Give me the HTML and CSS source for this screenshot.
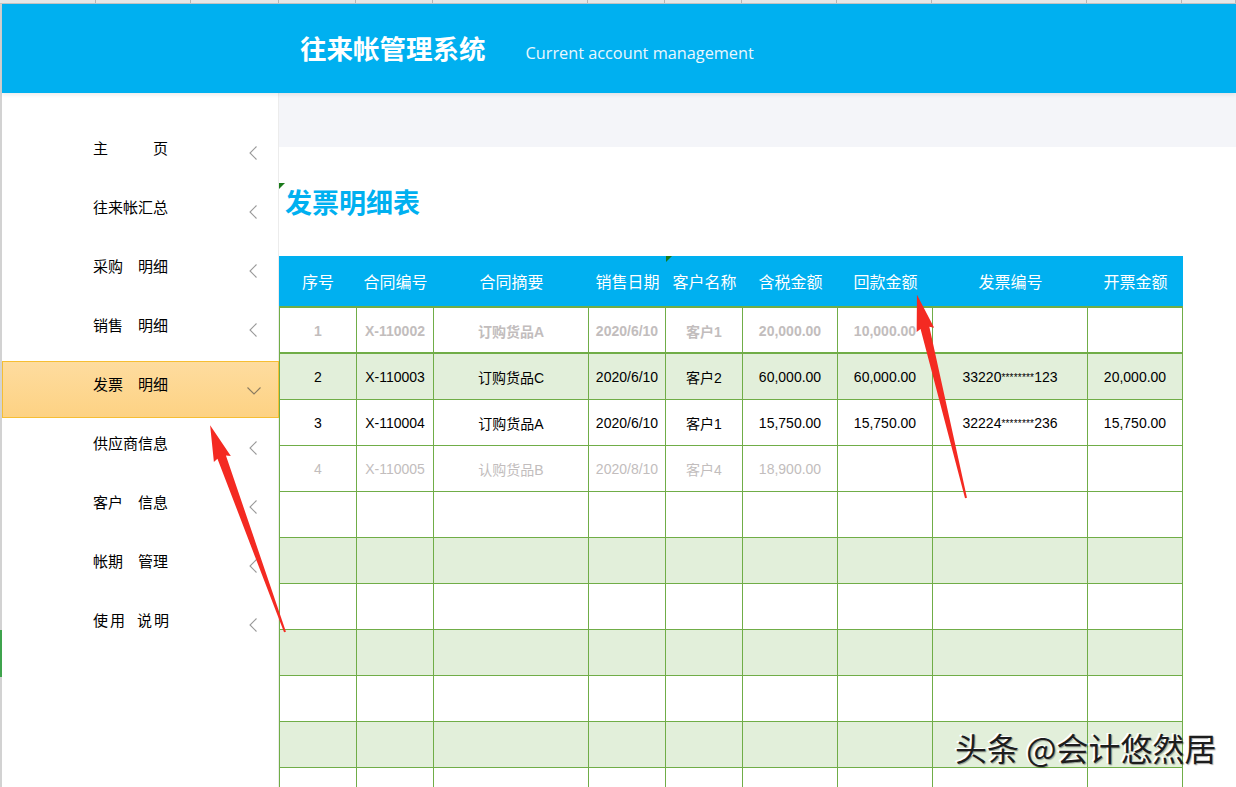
FILE: index.html
```html
<!DOCTYPE html>
<html lang="zh-CN">
<head>
<meta charset="utf-8">
<title>往来帐管理系统</title>
<link rel="stylesheet" href="styles.css">
</head>
<body>
<div class="colhdr">
  <span class="ch w96"></span><span class="ch w95"></span><span class="ch w88"></span><span class="ch w77"></span><span class="ch w77"></span><span class="ch w155"></span><span class="ch w77"></span><span class="ch w77"></span><span class="ch w95"></span><span class="ch w95"></span><span class="ch w155"></span><span class="ch w95"></span><span class="ch wrest"></span>
</div>
<div class="app">
  <div class="rowhdr"><div class="rowsel"></div></div>
  <div class="main">
    <header class="topbar">
      <h1 class="brand">往来帐管理系统</h1>
      <span class="sub">Current account management</span>
    </header>
    <div class="body">
      <nav class="sidebar">
        <div class="item"><span class="label">主　　　页</span><svg class="chev" viewBox="0 0 8 14"><polyline points="7.5,0.5 1,7 7.5,13.5"/></svg></div>
        <div class="item"><span class="label">往来帐汇总</span><svg class="chev" viewBox="0 0 8 14"><polyline points="7.5,0.5 1,7 7.5,13.5"/></svg></div>
        <div class="item"><span class="label">采购　明细</span><svg class="chev" viewBox="0 0 8 14"><polyline points="7.5,0.5 1,7 7.5,13.5"/></svg></div>
        <div class="item"><span class="label">销售　明细</span><svg class="chev" viewBox="0 0 8 14"><polyline points="7.5,0.5 1,7 7.5,13.5"/></svg></div>
        <div class="item active"><span class="label">发票　明细</span><svg class="chev-down" viewBox="0 0 14 8"><polyline points="0.5,0.5 7,7 13.5,0.5"/></svg></div>
        <div class="item"><span class="label">供应商信息</span><svg class="chev" viewBox="0 0 8 14"><polyline points="7.5,0.5 1,7 7.5,13.5"/></svg></div>
        <div class="item"><span class="label">客户　信息</span><svg class="chev" viewBox="0 0 8 14"><polyline points="7.5,0.5 1,7 7.5,13.5"/></svg></div>
        <div class="item"><span class="label">帐期　管理</span><svg class="chev" viewBox="0 0 8 14"><polyline points="7.5,0.5 1,7 7.5,13.5"/></svg></div>
        <div class="item"><span class="label spaced">使用<i class="gap"></i>说明</span><svg class="chev" viewBox="0 0 8 14"><polyline points="7.5,0.5 1,7 7.5,13.5"/></svg></div>
      </nav>
      <section class="content">
        <div class="band"></div>
        <h2 class="title">发票明细表</h2>
        <table class="grid">
          <colgroup>
            <col class="c78"><col class="c77"><col class="c155"><col class="c77"><col class="c77"><col class="c95"><col class="c95"><col class="c155"><col class="c95">
          </colgroup>
          <thead>
            <tr><th>序号</th><th>合同编号</th><th>合同摘要</th><th>销售日期</th><th class="note">客户名称</th><th>含税金额</th><th>回款金额</th><th>发票编号</th><th>开票金额</th></tr>
          </thead>
          <tbody>
            <tr class="faded first"><td>1</td><td>X-110002</td><td>订购货品A</td><td>2020/6/10</td><td>客户1</td><td>20,000.00</td><td>10,000.00</td><td></td><td></td></tr>
            <tr class="alt"><td>2</td><td>X-110003</td><td>订购货品C</td><td>2020/6/10</td><td>客户2</td><td>60,000.00</td><td>60,000.00</td><td>33220<span class="ast">********</span>123</td><td>20,000.00</td></tr>
            <tr><td>3</td><td>X-110004</td><td>订购货品A</td><td>2020/6/10</td><td>客户1</td><td>15,750.00</td><td>15,750.00</td><td>32224<span class="ast">********</span>236</td><td>15,750.00</td></tr>
            <tr class="faded"><td>4</td><td>X-110005</td><td>认购货品B</td><td>2020/8/10</td><td>客户4</td><td>18,900.00</td><td></td><td></td><td></td></tr>
            <tr><td></td><td></td><td></td><td></td><td></td><td></td><td></td><td></td><td></td></tr>
            <tr class="alt"><td></td><td></td><td></td><td></td><td></td><td></td><td></td><td></td><td></td></tr>
            <tr><td></td><td></td><td></td><td></td><td></td><td></td><td></td><td></td><td></td></tr>
            <tr class="alt"><td></td><td></td><td></td><td></td><td></td><td></td><td></td><td></td><td></td></tr>
            <tr><td></td><td></td><td></td><td></td><td></td><td></td><td></td><td></td><td></td></tr>
            <tr class="alt"><td></td><td></td><td></td><td></td><td></td><td></td><td></td><td></td><td></td></tr>
            <tr><td></td><td></td><td></td><td></td><td></td><td></td><td></td><td></td><td></td></tr>
          </tbody>
        </table>
      </section>
    </div>
  </div>
</div>
<div class="watermark">头条 @会计悠然居</div>
<svg class="arrows" viewBox="0 0 1236 787" width="1236" height="787">
  <g transform="translate(285 632) rotate(-109.9)">
    <polygon points="0,-1 0,1 186,4.5 184,9 220,0 184,-9 186,-4.5"/>
  </g>
  <g transform="translate(966 498) rotate(-103.57)">
    <polygon points="0,-1 0,1 175,4.5 173,9 209,0 173,-9 175,-4.5"/>
  </g>
</svg>
</body>
</html>
```

FILE: styles.css
```css
html, body {
  margin: 0;
  padding: 0;
  width: 1236px;
  height: 787px;
  overflow: hidden;
  background: #ffffff;
}
body {
  position: relative;
  font-family: "Noto Sans CJK SC", "Noto Sans", sans-serif;
}

/* spreadsheet column header strip */
.colhdr {
  display: flex;
  height: 3px;
  background: #e6e6e6;
  border-bottom: 1px solid #c4c4c4;
}
.ch { height: 3px; border-right: 1px solid #b5b5b5; box-sizing: border-box; flex: none; }
.w96 { width: 96px; }
.w95 { width: 95px; }
.w88 { width: 88px; }
.w77 { width: 77px; }
.w155 { width: 155px; }
.wrest { flex: 1; }

.app {
  display: flex;
  height: 783px;
}
.rowhdr {
  width: 2px;
  flex: none;
  background: #d2d2d2;
  display: flex;
  flex-direction: column;
}
.rowsel {
  margin-top: 626px;
  height: 47px;
  background: #3fa34d;
}
.main {
  flex: 1;
  display: flex;
  flex-direction: column;
  min-width: 0;
}

/* top bar */
.topbar {
  height: 89px;
  flex: none;
  background: #00b0f0;
  display: flex;
  align-items: baseline;
  padding-left: 298px;
  box-sizing: border-box;
  padding-top: 26px;
  box-shadow: 0 2px 4px rgba(0, 0, 0, 0.08);
  position: relative;
  z-index: 1;
}
.brand {
  margin: 0;
  font-size: 26.5px;
  line-height: 36px;
  font-weight: 700;
  color: #ffffff;
  font-family: "Noto Sans CJK SC", sans-serif;
}
.sub {
  margin-left: 40px;
  font-family: "Open Sans", "Noto Sans", sans-serif;
  font-size: 16.3px;
  color: #eaf7fe;
}

.body {
  flex: 1;
  display: flex;
  min-height: 0;
}

/* sidebar */
.sidebar {
  width: 277px;
  flex: none;
  box-sizing: border-box;
  border-right: 1px solid #ececec;
  padding-top: 32px;
  background: #ffffff;
  display: flex;
  flex-direction: column;
  gap: 2px;
}
.item {
  height: 57px;
  box-sizing: border-box;
  display: flex;
  align-items: flex-start;
  padding-left: 91px;
  padding-right: 21px;
  flex: none;
}
.label {
  font-size: 15px;
  line-height: 20px;
  padding-top: 13px;
  color: #000000;
  white-space: nowrap;
}
.label.spaced { letter-spacing: 2px; }
.gap { display: inline-block; width: 10px; }
.chev {
  margin-left: auto;
  margin-top: 21px;
  width: 8px;
  height: 14px;
  fill: none;
  stroke: #9a9a9a;
  stroke-width: 1.1;
}
.item.active {
  margin-right: -1px;
  border: 1px solid #f6be33;
  background: linear-gradient(#fedc9f, #fdd283);
  padding-left: 90px;
  padding-right: 17px;
}
.item.active .label { padding-top: 12px; }
.chev-down {
  margin-left: auto;
  margin-top: 25px;
  width: 14px;
  height: 8px;
  fill: none;
  stroke: #8a7a60;
  stroke-width: 1.1;
}

/* content */
.content {
  flex: 1;
  min-width: 0;
  display: flex;
  flex-direction: column;
}
.band {
  height: 54px;
  flex: none;
  background: #f4f5f9;
}
.title {
  position: relative;
  margin: 0;
  height: 109px;
  flex: none;
  display: flex;
  align-items: center;
  padding-left: 6px;
  font-size: 27px;
  font-weight: 700;
  color: #00b0f0;
  font-family: "Noto Sans CJK SC", sans-serif;
}
.title::before {
  content: "";
  position: absolute;
  left: 0;
  top: 36px;
  border-top: 6px solid #1a7a1a;
  border-right: 6px solid transparent;
}

/* table */
.grid {
  border-collapse: separate;
  border-spacing: 0;
  table-layout: fixed;
  width: 904px;
  font-family: "Liberation Sans", "Noto Sans CJK SC", sans-serif;
  font-size: 14px;
}
.c78 { width: 78px; }
.c77 { width: 77px; }
.c95 { width: 95px; }
.c155 { width: 155px; }
.grid th {
  height: 52px;
  padding: 0;
  box-sizing: border-box;
  background: #00b0f0;
  color: #ffffff;
  font-weight: 400;
  font-size: 16px;
  font-family: "Noto Sans CJK SC", sans-serif;
  border-bottom: 2px solid #70ad47;
  text-align: center;
  white-space: nowrap;
}
.grid th.note { position: relative; }
.grid th.note::before {
  content: "";
  position: absolute;
  left: 0;
  top: 0;
  border-top: 6px solid #1a7a1a;
  border-right: 6px solid transparent;
}
.grid td {
  height: 46px;
  padding: 0 0 0 0;
  box-sizing: border-box;
  border-right: 1px solid #70ad47;
  border-bottom: 1px solid #70ad47;
  text-align: center;
  color: #000000;
  white-space: nowrap;
}
.grid td:first-child { border-left: 1px solid #70ad47; }
.grid tr.first td { border-bottom-width: 2px; font-weight: 700; padding-top: 2px; }
.grid tr.alt td { background: #e2efda; }
.grid tr.faded td { color: #c2bdbd; }
.ast { font-size: 10px; vertical-align: 1px; letter-spacing: 0.2px; }

/* overlays */
.watermark {
  position: absolute;
  left: 955px;
  top: 728px;
  font-size: 32px;
  line-height: 38px;
  color: #1d1d1d;
  font-family: "Noto Sans CJK SC", sans-serif;
  text-shadow: -2px -1px 0 #ffffff, 1px 1px 1px rgba(0, 0, 0, 0.35);
  white-space: nowrap;
}
.arrows {
  position: absolute;
  left: 0;
  top: 0;
  pointer-events: none;
}
.arrows polygon { fill: #f42a22; }
```
